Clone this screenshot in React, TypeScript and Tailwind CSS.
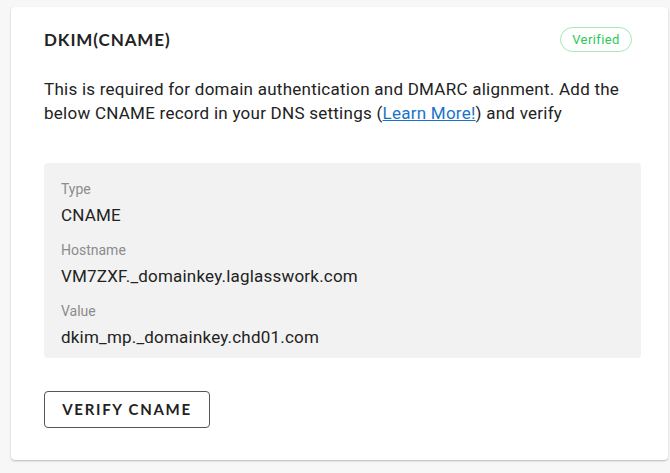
export default function App() {
  const records = [
    { label: 'Type', value: 'CNAME' },
    { label: 'Hostname', value: 'VM7ZXF._domainkey.laglasswork.com' },
    { label: 'Value', value: 'dkim_mp._domainkey.chd01.com' },
  ]

  return (
    <div className="min-h-[473px] w-[670px] bg-[#f7f7f7] pl-[11px] pt-[7px] font-['Roboto',sans-serif]">
      <div className="flex h-[453px] w-[657px] flex-col rounded-[4px] bg-white pl-[33px] pr-[27px] shadow-[0_1px_2px_rgba(0,0,0,0.25)]">
        {/* header */}
        <div className="mt-[20px] flex h-[25px] items-center justify-between pr-[9px]">
          <h2 className="font-['Lato',sans-serif] text-[17px] font-bold tracking-[0.9px] text-[#222]">
            DKIM(CNAME)
          </h2>
          <span className="flex h-[25px] w-[72px] items-center justify-center rounded-full border border-[#a6e8b8] text-[13px] tracking-[0.4px] text-[#2bc957]">
            Verified
          </span>
        </div>

        <p className="mt-[25px] text-[17px] leading-[24px] tracking-[0.25px] text-[#222]">
          This is required for domain authentication and DMARC alignment. Add the below CNAME record in your DNS
          settings (<a href="#" className="text-[#1a73c8] underline">Learn More!</a>) and verify
        </p>

        {/* record details */}
        <div className="mt-[38px] flex h-[195px] w-[597px] flex-col rounded-[4px] bg-[#f2f2f2] px-[17px] pt-[16px]">
          {records.map((r) => (
            <div key={r.label} className="mb-[13px] flex flex-col">
              <span className="text-[14px] leading-[20px] text-[#8c8c8c]">{r.label}</span>
              <span className="mt-[4px] text-[17px] leading-[24px] tracking-[0.2px] text-[#222]">{r.value}</span>
            </div>
          ))}
        </div>

        <button className="mt-[33px] flex h-[37px] w-[166px] items-center justify-center rounded-[4px] border border-[#555] bg-white font-['Lato',sans-serif] text-[15px] font-bold tracking-[1.7px] text-[#222]">
          VERIFY CNAME
        </button>
      </div>
    </div>
  )
}
